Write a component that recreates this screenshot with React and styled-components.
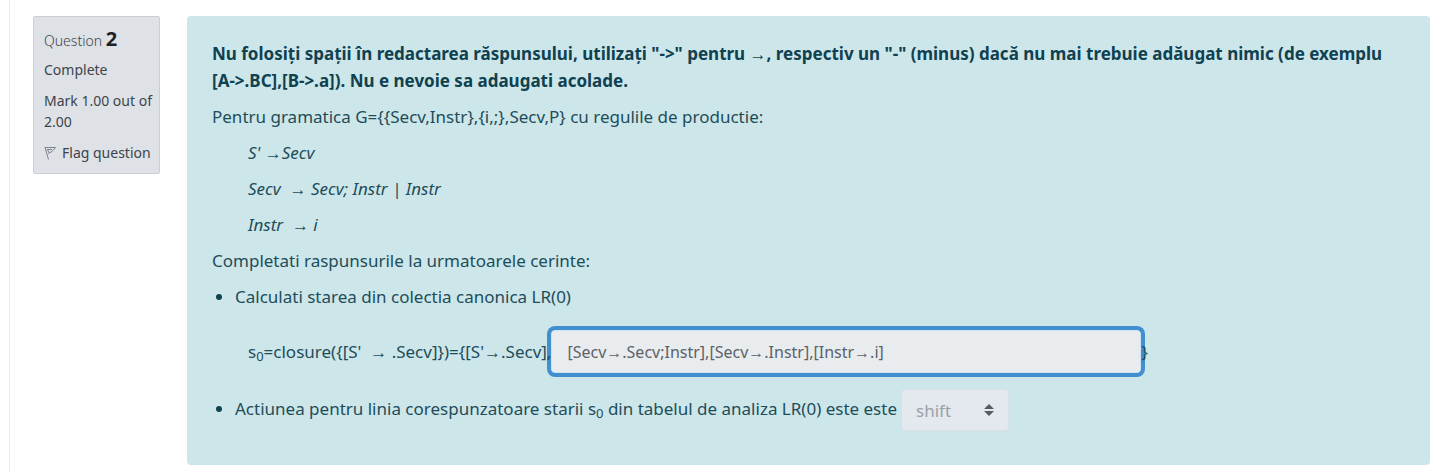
import React from "react";
import styled, { createGlobalStyle } from "styled-components";

const GlobalStyle = createGlobalStyle`
  *, *::before, *::after { box-sizing: border-box; }
  body {
    margin: 0;
    background: #fff;
    font-family: "Noto Sans", "Open Sans", sans-serif;
    font-size: 17px;
    line-height: 27px;
    color: #1d4d59;
  }
`;

const Page = styled.div`
  display: flex;
  min-height: 100vh;
  padding-left: 9px;
`;

const Main = styled.main`
  flex: 1;
  display: flex;
  align-items: flex-start;
  gap: 27px;
  padding: 16px 10px 7px 23px;
  border-left: 1px solid #e8eaec;
  box-shadow: inset 4px 0 0 #fff, inset 5px 0 0 #f6f6f6;
`;

const Info = styled.aside`
  flex: none;
  width: 127px;
  padding: 10px 6px 10px 10px;
  display: flex;
  flex-direction: column;
  gap: 10px;
  border: 1px solid #cacdd3;
  border-radius: 2px;
  background: #dee2e6;
  color: #3d444b;
  font-size: 14px;
  line-height: 21px;
`;

const InfoTitle = styled.h3`
  margin: 0;
  font-size: 14px;
  font-weight: 300;
  line-height: 24px;
`;

const Number = styled.span`
  font-size: 20px;
  font-weight: 700;
  color: #1d2125;
`;

const InfoText = styled.div`
  margin-top: ${(p) => (p.$tight ? "-4px" : "0")};
`;

const FlagButton = styled.button`
  display: flex;
  align-items: center;
  gap: 6px;
  padding: 0;
  border: 0;
  background: none;
  font: inherit;
  color: inherit;
  white-space: nowrap;
`;

const Panel = styled.section`
  flex: 1;
  min-width: 0;
  padding: 24px 25px 34px;
  border-radius: 4px;
  background: #cde6ea;
`;

const Paragraph = styled.p`
  margin: 0 0 9px;
  padding-left: ${(p) => (p.$indent ? "36px" : "0")};
  font-style: ${(p) => (p.$rule ? "italic" : "normal")};
  font-weight: ${(p) => (p.$strong ? 700 : 400)};
  color: ${(p) => (p.$strong ? "#0f4150" : "inherit")};
`;

const Bullets = styled.ul`
  margin: 0;
  padding-left: 23px;
  li::marker { color: #0c4450; }
`;

const Formula = styled.div`
  display: flex;
  align-items: center;
  padding: 20px 0 16px 36px;
  white-space: pre;
`;

const FormulaText = styled.label`
  position: relative;
  z-index: 1;
`;

const Sub = styled.sub`
  font-size: 13px;
  line-height: 0;
  vertical-align: -3px;
`;

const Answer = styled.input`
  width: 590px;
  height: 43px;
  padding: 0 15px;
  border: 1px solid #cfe3f7;
  border-radius: 4px;
  outline: 0;
  box-shadow: 0 0 0 4px #428fd0;
  background: #e9ecef;
  font: inherit;
  font-size: 16px;
  color: #5b626a;
`;

const SelectWrap = styled.span`
  display: inline-grid;
  align-items: center;
  margin-left: 4px;
  vertical-align: middle;
  > * { grid-area: 1 / 1; }
  svg { justify-self: end; margin-right: 15px; pointer-events: none; }
`;

const Select = styled.select`
  appearance: none;
  width: 108px;
  height: 42px;
  padding: 0 14px;
  border: 1px solid #d9e1e6;
  border-radius: 4px;
  background: #e3e9ee;
  font: inherit;
  color: #9aa1a8;
  opacity: 1;
`;

export default function App() {
  return (
    <>
      <GlobalStyle />
      <Page>
        <Main>
          <Info>
            <InfoTitle>Question <Number>2</Number></InfoTitle>
            <InfoText $tight>Complete</InfoText>
            <InfoText>Mark 1.00 out of 2.00</InfoText>
            <FlagButton type="button">
              <svg width="12" height="14" viewBox="0 0 12 14" fill="none" stroke="#7b8188">
                <path d="M1 1.500h10.500L8 5.500 4 7.500M1 1.500l3.500 12M3 3l2 3.500M4 3.500h4" />
              </svg>
              Flag question
            </FlagButton>
          </Info>
          <Panel>
            <Paragraph $strong>
              Nu folosiți spații în redactarea răspunsului, utilizați "-&gt;" pentru →, respectiv un "-" (minus) dacă nu mai trebuie adăugat nimic (de exemplu [A-&gt;.BC],[B-&gt;.a]). Nu e nevoie sa adaugati acolade.
            </Paragraph>
            <Paragraph>{"Pentru gramatica G={{Secv,Instr},{i,;},Secv,P} cu regulile de productie:"}</Paragraph>
            <Paragraph $indent $rule>S' →Secv</Paragraph>
            <Paragraph $indent $rule>Secv &nbsp;→ Secv; Instr | Instr</Paragraph>
            <Paragraph $indent $rule>Instr &nbsp;→ i</Paragraph>
            <Paragraph>Completati raspunsurile la urmatoarele cerinte:</Paragraph>
            <Bullets>
              <li>Calculati starea din colectia canonica LR(0)</li>
            </Bullets>
            <Formula>
              <FormulaText htmlFor="closure">
                s<Sub>0</Sub>{"=closure({[S'  → .Secv]})={[S'→.Secv],"}
              </FormulaText>
              <Answer id="closure" readOnly value="[Secv→.Secv;Instr],[Secv→.Instr],[Instr→.i]" />
              <FormulaText as="span">{"}"}</FormulaText>
            </Formula>
            <Bullets>
              <li>
                <label htmlFor="action">
                  Actiunea pentru linia corespunzatoare starii s<Sub>0</Sub> din tabelul de analiza LR(0) este este
                </label>
                <SelectWrap>
                  <Select id="action" disabled defaultValue="shift">
                    <option value="shift">shift</option>
                  </Select>
                  <svg width="10" height="12" viewBox="0 0 10 12" fill="#555c63">
                    <path d="M5 0l5 5H0zM0 7h10l-5 5z" />
                  </svg>
                </SelectWrap>
              </li>
            </Bullets>
          </Panel>
        </Main>
      </Page>
    </>
  );
}
